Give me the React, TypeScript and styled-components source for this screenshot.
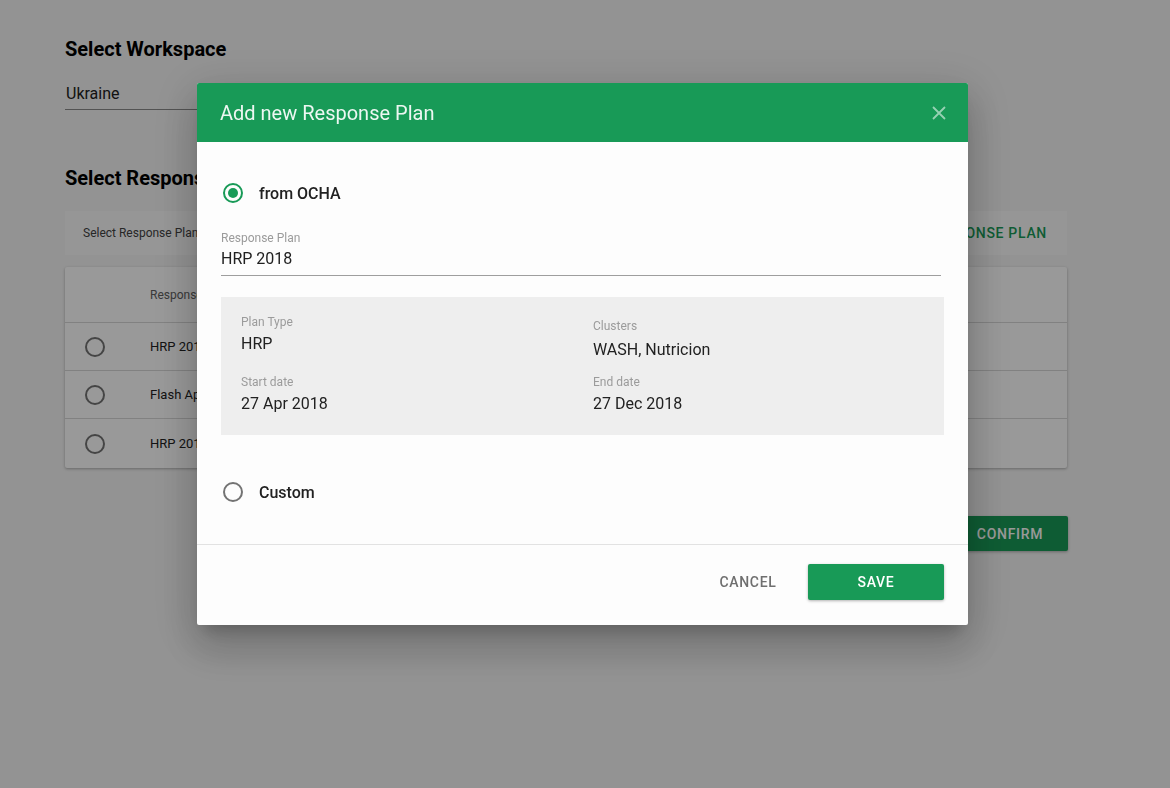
import React from "react";
import styled, { createGlobalStyle } from "styled-components";

const green = "#189a57";

const Global = createGlobalStyle`
body {
  margin: 0;
  font-family: Roboto, "Liberation Sans", sans-serif;
  background: #f5f5f5;
  color: #212121;
}
`;

const Page = styled.div`
width: 1002px;
padding: 37px 0 40px 65px;
`;
const Heading = styled.h2`
margin: 0;
font-size: 20px;
line-height: 24px;
font-weight: 700;
color: #000;
`;
const Select = styled.div`
width: 300px;
margin: 23px 0 56px;
font-size: 16px;
line-height: 20px;
padding: 0 0 5px 1px;
border-bottom: 1px solid #8a8a8a;
`;
const Toolbar = styled.div`
margin-top: 21px;
height: 44px;
background: #fbfbfb;
display: flex;
align-items: center;
justify-content: space-between;
padding: 0 20px 0 18px;
font-size: 12px;
color: #424242;
`;
const TextButton = styled.span`
color: ${green};
font-size: 14px;
font-weight: 500;
letter-spacing: 0.7px;
text-transform: uppercase;
`;
const Card = styled.div`
margin-top: 12px;
background: #fff;
box-shadow: 0 1px 3px rgba(0, 0, 0, 0.3);
border-radius: 2px;
`;
const Row = styled.div<{ $head?: boolean }>`
box-sizing: border-box;
display: grid;
grid-template-columns: 85px 1fr;
align-items: center;
height: ${p => (p.$head ? 56 : 48)}px;
border-bottom: 1px solid #d8d8d8;
font-size: ${p => (p.$head ? 12 : 13)}px;
color: ${p => (p.$head ? "#616161" : "#212121")};
&:last-child { border-bottom: none; height: 49px; }
`;
const Footer = styled.div`
display: flex;
justify-content: flex-end;
margin-top: 48px;
`;
const Raised = styled.button`
border: none;
border-radius: 2px;
background: ${green};
color: #fff;
font-family: inherit;
font-size: 14px;
font-weight: 500;
letter-spacing: 0.7px;
text-transform: uppercase;
height: 36px;
box-shadow: 0 1px 3px rgba(0, 0, 0, 0.3);
`;
const Confirm = styled(Raised)`
width: 116px;
height: 35px;
margin-right: -1px;
`;

const Radio = styled.span<{ $on?: boolean }>`
box-sizing: border-box;
width: 20px;
height: 20px;
border-radius: 50%;
border: 2px solid ${p => (p.$on ? green : "#737373")};
display: inline-flex;
align-items: center;
justify-content: center;
margin-left: 20px;
&::after {
  content: "";
  width: 10px;
  height: 10px;
  border-radius: 50%;
  background: ${p => (p.$on ? green : "transparent")};
}
`;

const Overlay = styled.div`
position: fixed;
inset: 0;
background: rgba(0, 0, 0, 0.4);
padding: 83px 0 0 197px;
`;
const Modal = styled.div`
width: 771px;
background: #fdfdfd;
border-radius: 2px;
overflow: hidden;
box-shadow: 0 11px 15px -7px rgba(0, 0, 0, 0.2), 0 24px 38px 3px rgba(0, 0, 0, 0.14), 0 9px 46px 8px rgba(0, 0, 0, 0.12);
`;
const ModalHead = styled.div`
height: 59px;
background: ${green};
display: flex;
align-items: center;
justify-content: space-between;
padding: 0 22px 0 23px;
color: rgba(255, 255, 255, 0.92);
font-size: 20px;
`;
const Body = styled.div`
padding: 31px 24px 32px;
`;
const Option = styled.label`
display: flex;
align-items: center;
gap: 16px;
height: 40px;
font-size: 16px;
font-weight: 500;
color: #212121;
`;
const Field = styled.div`
width: 720px;
margin-top: 18px;
border-bottom: 1px solid #9e9e9e;
padding-bottom: 6px;
`;
const Label = styled.div<{ $shift?: number }>`
font-size: 12px;
line-height: 14px;
color: #9b9b9b;
margin-top: ${p => p.$shift ?? 0}px;
`;
const Value = styled.div<{ $gap?: number }>`
font-size: 16px;
line-height: 20px;
color: #212121;
margin-top: ${p => p.$gap ?? 4}px;
`;
const InfoBox = styled.div`
margin-top: 21px;
width: 723px;
box-sizing: border-box;
background: #eeeeee;
padding: 18px 20px 21px;
display: grid;
grid-template-columns: 352px 1fr;
row-gap: 15px;
`;
const Custom = styled(Option)`
margin-top: 37px;
`;
const ModalFoot = styled.div`
border-top: 1px solid #e2e2e2;
display: flex;
justify-content: flex-end;
align-items: center;
gap: 16px;
padding: 19px 24px 25px;
`;
const Flat = styled.button`
border: none;
background: transparent;
color: #6f6f6f;
font-family: inherit;
font-size: 14px;
font-weight: 500;
letter-spacing: 0.7px;
height: 36px;
width: 88px;
`;
const Save = styled(Raised)`
width: 136px;
`;

const Close = () => (
  <svg width="14" height="14" viewBox="0 0 14 14">
    <path d="M1 1L13 13M13 1L1 13" stroke="rgba(255,255,255,0.55)" strokeWidth="1.8" />
  </svg>
);

const plans = ["HRP 2018 Ukraine", "Flash Appeal 2018", "HRP 2017 Ukraine"];

export default function App() {
  return (
    <>
      <Global />
      <Page>
        <Heading>Select Workspace</Heading>
        <Select>Ukraine</Select>
        <Heading>Select Response Plan</Heading>
        <Toolbar>
          <span>Select Response Plan from the list or add a new one</span>
          <TextButton>Add new Response Plan</TextButton>
        </Toolbar>
        <Card>
          <Row $head>
            <span />
            <span>Response Plan</span>
          </Row>
          {plans.map(p => (
            <Row key={p}>
              <Radio />
              <span>{p}</span>
            </Row>
          ))}
        </Card>
        <Footer>
          <Confirm>Confirm</Confirm>
        </Footer>
      </Page>
      <Overlay>
        <Modal>
          <ModalHead>
            <span>Add new Response Plan</span>
            <Close />
          </ModalHead>
          <Body>
            <Option>
              <Radio $on style={{ marginLeft: 2 }} />
              <span>from OCHA</span>
            </Option>
            <Field>
              <Label>Response Plan</Label>
              <Value>HRP 2018</Value>
            </Field>
            <InfoBox>
              <div>
                <Label>Plan Type</Label>
                <Value $gap={5}>HRP</Value>
              </div>
              <div>
                <Label $shift={4}>Clusters</Label>
                <Value $gap={7}>WASH, Nutricion</Value>
              </div>
              <div>
                <Label>Start date</Label>
                <Value $gap={5}>27 Apr 2018</Value>
              </div>
              <div>
                <Label>End date</Label>
                <Value $gap={5}>27 Dec 2018</Value>
              </div>
            </InfoBox>
            <Custom>
              <Radio style={{ marginLeft: 2 }} />
              <span>Custom</span>
            </Custom>
          </Body>
          <ModalFoot>
            <Flat>CANCEL</Flat>
            <Save>Save</Save>
          </ModalFoot>
        </Modal>
      </Overlay>
    </>
  );
}
